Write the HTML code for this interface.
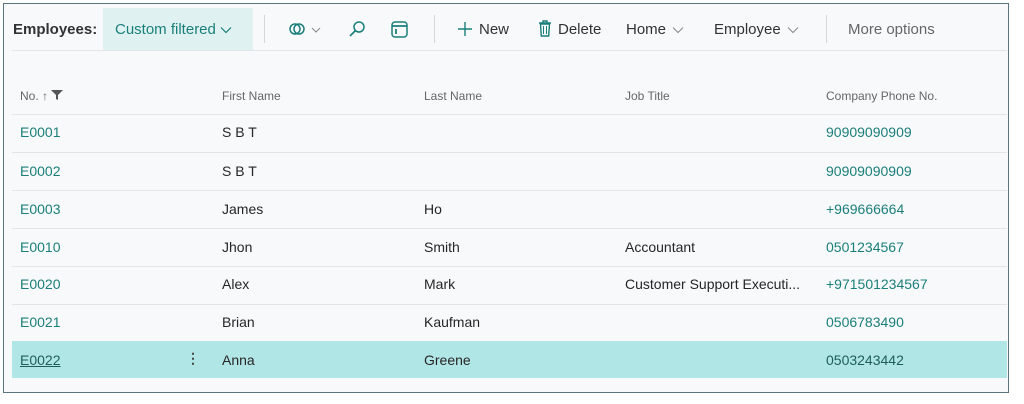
<!DOCTYPE html>
<html><head><style>
body{margin:0;width:1024px;height:404px;background:#fff;font-family:"Liberation Sans",sans-serif;position:relative;overflow:hidden}
.frame{position:absolute;left:3px;top:3px;width:1006px;height:390px;border:1.5px solid #5a7480;background:#f8f9fa;box-sizing:border-box}
.a{position:absolute;white-space:nowrap}
.tb{font-size:15px;color:#333;top:21px}
.hl{position:absolute;left:12px;width:995px;height:1px;background:#e3e5e7}
.h{font-size:12px;color:#666;top:89px}
.c{font-size:14px;color:#262626}
.a.teal{color:#1a7f7a}
.sep{position:absolute;top:15px;width:1px;height:28px;background:#d6d6d6}
.chev{display:inline-block;vertical-align:middle;margin-left:4px}
</style></head><body>
<div class="frame"></div>
<div class="a" style="left:103px;top:8px;width:150px;height:43px;background:#dff2f1"></div>
<div class="a tb" style="left:13px;font-weight:bold;color:#333">Employees:</div>
<div class="a tb teal" style="left:115px">Custom filtered<svg class="chev" width="12" height="8"><path d="M1 1.5l5 5 5-5" fill="none" stroke="#1a7f7a" stroke-width="1.2"/></svg></div>
<div class="sep" style="left:264px"></div>
<svg class="a" style="left:288px;top:20px" width="40" height="20"><circle cx="7" cy="9" r="5" fill="none" stroke="#1a7f7a" stroke-width="1.5"/><circle cx="11" cy="9" r="5" fill="none" stroke="#1a7f7a" stroke-width="1.5"/><path d="M24 8l4 4 4-4" fill="none" stroke="#888" stroke-width="1"/></svg>
<svg class="a" style="left:348px;top:20px" width="20" height="20"><circle cx="11" cy="7" r="5" fill="none" stroke="#1a7f7a" stroke-width="1.5"/><path d="M7.5 10.5L2 16" stroke="#1a7f7a" stroke-width="1.6"/></svg>
<svg class="a" style="left:390px;top:20px" width="20" height="20"><rect x="2" y="2" width="15" height="15" rx="3" fill="none" stroke="#1a7f7a" stroke-width="1.5"/><path d="M2 6h15M6 9v5" stroke="#1a7f7a" stroke-width="1.8"/></svg>
<div class="sep" style="left:434px"></div>
<svg class="a" style="left:457px;top:21px" width="16" height="16"><path d="M8 1v14M1 8h14" stroke="#1a7f7a" stroke-width="1.4"/></svg>
<div class="a tb" style="left:479px">New</div>
<svg class="a" style="left:537px;top:20px" width="16" height="18"><path d="M2 3h12M6 3V1h4v2M3.5 4h9l-.8 12h-7.4z" fill="none" stroke="#1a7f7a" stroke-width="1.4"/><path d="M6.5 6v8M9.5 6v8" stroke="#1a7f7a"/></svg>
<div class="a tb" style="left:558px">Delete</div>
<div class="a tb" style="left:626px">Home<svg class="chev" width="12" height="8" style="margin-left:6px"><path d="M1 1.5l5 5 5-5" fill="none" stroke="#888" stroke-width="1"/></svg></div>
<div class="a tb" style="left:714px">Employee<svg class="chev" width="12" height="8" style="margin-left:6px"><path d="M1 1.5l5 5 5-5" fill="none" stroke="#888" stroke-width="1"/></svg></div>
<div class="sep" style="left:826px"></div>
<div class="a tb" style="left:848px;color:#666">More options</div>
<div class="hl" style="top:50px"></div>
<div class="a h" style="left:20px">No. &#8593; <svg width="12" height="10"><path d="M0 0h12L7 5v5L5 9V5z" fill="#555"/></svg></div>
<div class="a h" style="left:222px">First Name</div>
<div class="a h" style="left:424px">Last Name</div>
<div class="a h" style="left:625px">Job Title</div>
<div class="a h" style="left:826px">Company Phone No.</div>
<div class="hl" style="top:114px"></div><div class="hl" style="top:152px"></div><div class="hl" style="top:190px"></div><div class="hl" style="top:228px"></div><div class="hl" style="top:266px"></div><div class="hl" style="top:304px"></div>
<div class="a" style="left:12px;top:341px;width:995px;height:37px;background:#b1e6e7"></div>
<div class="a c teal" style="left:20px;top:124px">E0001</div><div class="a c" style="left:222px;top:124px">S B T</div><div class="a c teal" style="left:826px;top:124px">90909090909</div>
<div class="a c teal" style="left:20px;top:163px">E0002</div><div class="a c" style="left:222px;top:163px">S B T</div><div class="a c teal" style="left:826px;top:163px">90909090909</div>
<div class="a c teal" style="left:20px;top:201px">E0003</div><div class="a c" style="left:222px;top:201px">James</div><div class="a c" style="left:424px;top:201px">Ho</div><div class="a c teal" style="left:826px;top:201px">+969666664</div>
<div class="a c teal" style="left:20px;top:239px">E0010</div><div class="a c" style="left:222px;top:239px">Jhon</div><div class="a c" style="left:424px;top:239px">Smith</div><div class="a c" style="left:625px;top:239px">Accountant</div><div class="a c teal" style="left:826px;top:239px">0501234567</div>
<div class="a c teal" style="left:20px;top:276px">E0020</div><div class="a c" style="left:222px;top:276px">Alex</div><div class="a c" style="left:424px;top:276px">Mark</div><div class="a c" style="left:625px;top:276px">Customer Support Executi...</div><div class="a c teal" style="left:826px;top:276px">+971501234567</div>
<div class="a c teal" style="left:20px;top:314px">E0021</div><div class="a c" style="left:222px;top:314px">Brian</div><div class="a c" style="left:424px;top:314px">Kaufman</div><div class="a c teal" style="left:826px;top:314px">0506783490</div>
<div class="a c" style="left:20px;top:352px;color:#1d5e5b;text-decoration:underline">E0022</div><div class="a c" style="left:186px;top:350px;font-weight:bold;color:#444">&#8942;</div><div class="a c" style="left:222px;top:352px">Anna</div><div class="a c" style="left:424px;top:352px">Greene</div><div class="a c" style="left:826px;top:352px;color:#1d5e5b">0503243442</div>
</body></html>
